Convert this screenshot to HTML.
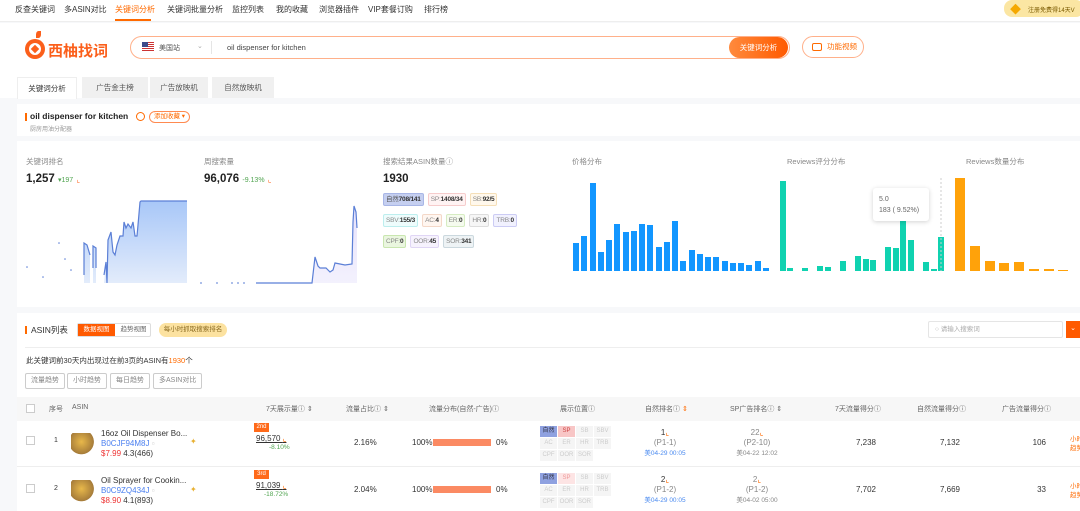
<!DOCTYPE html>
<html><head><meta charset="utf-8"><style>
*{margin:0;padding:0;box-sizing:border-box}
body{width:1080px;height:511px;overflow:hidden;background:#f7f8fa;font-family:"Liberation Sans","Noto Sans CJK SC",sans-serif;font-size:8px;color:#333;position:relative}
.a{position:absolute}
.nav{left:0;top:0;width:1080px;height:22px;background:#fff;border-bottom:1px solid #eee}
.nav span{position:absolute;top:4px;font-size:8px;color:#333}
.white{background:#fff}
.row{position:absolute;left:383px;display:flex;gap:4px}
.tag{height:13px;line-height:11px;font-size:6.5px;padding:0 2px;border:1px solid;border-radius:2px;white-space:nowrap;letter-spacing:-.2px}
.th{position:absolute;top:404px;font-size:7px;color:#666}
.r{position:absolute;font-size:8px;color:#333}
.pos{position:absolute;width:17px;height:11px;font-size:6px;line-height:11px;text-align:center;color:#ccc;background:#f5f5f5}
.btn{position:absolute;top:373px;height:16px;line-height:14px;border:1px solid #ccc;border-radius:2px;font-size:7px;color:#888;padding:0 5px}
</style></head><body>
<div class="a nav">
<span style="left:15px">反查关键词</span><span style="left:64px">多ASIN对比</span>
<span style="left:115px;color:#ff6a00">关键词分析</span><span style="left:167px">关键词批量分析</span>
<span style="left:232px">监控列表</span><span style="left:276px">我的收藏</span><span style="left:319px">浏览器插件</span>
<span style="left:368px">VIP套餐订购</span><span style="left:424px">排行榜</span>
<div class="a" style="left:115px;top:19px;width:36px;height:2px;background:#ff6a00"></div>
<div class="a" style="left:1004px;top:0;width:80px;height:17px;background:#fbe6a3;border-radius:8px"></div>
<div class="a" style="left:1010px;top:1px;font-size:11px;color:#f5a800">◆</div>
<span style="left:1028px;top:5px;font-size:6px;color:#7a5a00">注册免费得14天V</span>
</div>
<div class="a white" style="left:0;top:23px;width:1080px;height:75px"></div>
<div class="a" style="left:25px;top:39px;width:20px;height:20px;border-radius:50%;background:#fb5f1b"></div>
<div class="a" style="left:29px;top:43px;width:12px;height:12px;border-radius:50%;background:#fff"></div>
<div class="a" style="left:32px;top:46px;width:6px;height:6px;background:#fb5f1b;transform:rotate(45deg)"></div>
<div class="a" style="left:36px;top:31px;width:5px;height:7px;border-radius:50% 0;background:#fb5f1b"></div>
<div class="a" style="left:48px;top:40px;font-size:15px;font-weight:bold;color:#fb5f1b">西柚找词</div>
<div class="a" style="left:130px;top:36px;width:660px;height:23px;border:1px solid #ffb08a;border-radius:12px;background:#fff"></div>
<div class="a" style="left:142px;top:42px;width:12px;height:9px;background:repeating-linear-gradient(#c33 0 1px,#fff 1px 2px)"></div>
<div class="a" style="left:142px;top:42px;width:6px;height:5px;background:#3c4b8a"></div>
<div class="a" style="left:159px;top:43px;font-size:7px;color:#555">美国站</div>
<div class="a" style="left:197px;top:42px;font-size:7px;color:#aaa">⌄</div>
<div class="a" style="left:211px;top:41px;width:1px;height:13px;background:#e5e5e5"></div>
<div class="a" style="left:227px;top:43px;font-size:7.5px;color:#444">oil dispenser for kitchen</div>
<div class="a" style="left:729px;top:37px;width:59px;height:21px;border-radius:11px;background:linear-gradient(90deg,#ff8a3d,#ff5a00);color:#fff;font-size:7.5px;line-height:21px;text-align:center">关键词分析</div>
<div class="a" style="left:802px;top:36px;width:62px;height:22px;border:1px solid #ffb08a;border-radius:11px;color:#ff6a00;font-size:7.5px;line-height:20px;padding-left:24px">功能视频</div>
<div class="a" style="left:812px;top:43px;width:10px;height:8px;border:1.2px solid #ff6a00;border-radius:2px"></div>
<div class="a" style="left:17px;top:77px;width:60px;height:22px;background:#fff;border:1px solid #eee;border-bottom:none;font-size:7.5px;line-height:21px;text-align:center;color:#333">关键词分析</div>
<div class="a" style="left:82px;top:77px;width:66px;height:21px;background:#f0f0f0;font-size:7.5px;line-height:21px;text-align:center;color:#555">广告金主榜</div>
<div class="a" style="left:148px;top:77px;width:60px;height:21px;background:#f0f0f0;border-left:2px solid #fff;font-size:7.5px;line-height:21px;text-align:center;color:#555">广告放映机</div>
<div class="a" style="left:212px;top:77px;width:62px;height:21px;background:#f0f0f0;font-size:7.5px;line-height:21px;text-align:center;color:#555">自然放映机</div>
<div class="a white" style="left:17px;top:104px;width:1063px;height:32px"></div>
<div class="a" style="left:25px;top:113px;width:2px;height:8px;background:#ff6a00"></div>
<div class="a" style="left:30px;top:111px;font-size:8.5px;font-weight:bold;color:#222">oil dispenser for kitchen</div>
<div class="a" style="left:136px;top:112px;width:9px;height:9px;border:1px solid #ff6a00;border-radius:50%"></div>
<div class="a" style="left:149px;top:111px;width:41px;height:12px;border:1px solid #ff8a50;border-radius:6px;font-size:6.5px;color:#ff6a00;line-height:10px;padding-left:4px">添加收藏 ▾</div>
<div class="a" style="left:30px;top:124px;font-size:6px;color:#999">厨房用油分配器</div>
<div class="a white" style="left:17px;top:141px;width:1063px;height:166px"></div>
<div class="a" style="left:26px;top:156px;font-size:7.5px;color:#888">关键词排名</div>
<div class="a" style="left:26px;top:173px;font-size:11.5px;font-weight:bold;color:#222">1,257 <span style="font-size:7px;color:#52a552;font-weight:normal">▾197</span> <span style="font-size:8px;color:#ff7a3d;font-weight:normal">⌞</span></div>
<div class="a" style="left:204px;top:156px;font-size:7.5px;color:#888">周搜索量</div>
<div class="a" style="left:204px;top:173px;font-size:11.5px;font-weight:bold;color:#222">96,076 <span style="font-size:7px;color:#52a552;font-weight:normal">-9.13%</span> <span style="font-size:8px;color:#ff7a3d;font-weight:normal">⌞</span></div>
<div class="a" style="left:383px;top:156px;font-size:7.5px;color:#888">搜索结果ASIN数量ⓘ</div>
<div class="a" style="left:383px;top:173px;font-size:11.5px;font-weight:bold;color:#222">1930</div>
<svg class="a" style="left:0;top:0" width="1080" height="311">
<defs><linearGradient id="g1" x1="0" y1="0" x2="0" y2="1"><stop offset="0" stop-color="#a8c7f8"/><stop offset="1" stop-color="#e3ecfb"/></linearGradient>
<linearGradient id="g2" x1="0" y1="0" x2="0" y2="1"><stop offset="0" stop-color="#e6e1fb"/><stop offset="1" stop-color="#f3f1fd"/></linearGradient></defs>
<path d="M84,283 L84,243 L87,245 L90,255 L90,283Z M93,283 L93,246 L96,248 L96,283Z M104,283 L106,262 L107,266 L108,240 L111,232 L113,252 L115,255 L117,245 L120,236 L123,236 L124,222 L126,228 L128,224 L131,228 L133,222 L135,236 L137,236 L138,225 L140,202 L141,201 L187,201 L187,283Z" fill="url(#g1)"/>
<path d="M84,275 L84,243 L87,245 L90,255 M93,268 L93,246 L96,248 L96,268 M104,275 L106,262 L107,283 L108,240 L111,232 L113,252 L115,255 L117,245 L120,236 L123,236 L124,222 L126,228 L128,224 L131,228 L133,222 L135,236 L137,236 L138,225 L140,202 L141,201 L187,201" fill="none" stroke="#5b7fd6" stroke-width="1.2"/>
<g fill="#5b7fd6"><circle cx="27" cy="267" r=".8"/><circle cx="43" cy="277" r=".8"/><circle cx="59" cy="243" r=".8"/><circle cx="65" cy="259" r=".8"/><circle cx="71" cy="270" r=".8"/></g>
<path d="M312,283 L315,257 L318,266 L320,268 L326,268 L330,272 L333,270 L335,263 L340,264 L345,265 L352,264 L353,222 L354,206 L356,212 L357,228 L357,283Z" fill="url(#g2)"/>
<path d="M256,283 L312,283 L315,257 L318,266 L320,268 L326,268 L330,272 L333,270 L335,263 L340,264 L345,265 L352,264 L353,222 L354,206 L356,212 L357,228" fill="none" stroke="#5b7fd6" stroke-width="1.2"/>
<g fill="#5b7fd6"><rect x="200" y="282.5" width="2" height="1"/><rect x="216" y="282.5" width="2" height="1"/><rect x="231" y="282.5" width="2" height="1"/><rect x="237" y="282.5" width="2" height="1"/><rect x="243" y="282.5" width="2" height="1"/></g>
<g fill="#1296ff">
<rect x="573" y="243" width="6" height="28"/><rect x="581" y="236" width="6" height="35"/><rect x="590" y="183" width="6" height="88"/><rect x="598" y="252" width="6" height="19"/><rect x="606" y="240" width="6" height="31"/><rect x="614" y="224" width="6" height="47"/><rect x="623" y="232" width="6" height="39"/><rect x="631" y="231" width="6" height="40"/><rect x="639" y="224" width="6" height="47"/><rect x="647" y="225" width="6" height="46"/><rect x="656" y="247" width="6" height="24"/><rect x="664" y="242" width="6" height="29"/><rect x="672" y="221" width="6" height="50"/><rect x="680" y="261" width="6" height="10"/><rect x="689" y="250" width="6" height="21"/><rect x="697" y="254" width="6" height="17"/><rect x="705" y="257" width="6" height="14"/><rect x="713" y="257" width="6" height="14"/><rect x="722" y="261" width="6" height="10"/><rect x="730" y="263" width="6" height="8"/><rect x="738" y="263" width="6" height="8"/><rect x="746" y="265" width="6" height="6"/><rect x="755" y="261" width="6" height="10"/><rect x="763" y="268" width="6" height="3"/></g>
<g fill="#10d2b0">
<rect x="780" y="181" width="6" height="90"/><rect x="787" y="268" width="6" height="3"/><rect x="802" y="268" width="6" height="3"/><rect x="817" y="266" width="6" height="5"/><rect x="825" y="267" width="6" height="4"/><rect x="840" y="261" width="6" height="10"/><rect x="855" y="256" width="6" height="15"/><rect x="863" y="259" width="6" height="12"/><rect x="870" y="260" width="6" height="11"/><rect x="885" y="247" width="6" height="24"/><rect x="893" y="248" width="6" height="23"/><rect x="900" y="188" width="6" height="83"/><rect x="908" y="240" width="6" height="31"/><rect x="923" y="262" width="6" height="9"/><rect x="931" y="269" width="6" height="2"/><rect x="938" y="237" width="6" height="34"/></g>
<line x1="941" y1="178" x2="941" y2="271" stroke="#ccc" stroke-dasharray="2,2"/>
<g fill="#ffa20a">
<rect x="955" y="178" width="10" height="93"/><rect x="970" y="246" width="10" height="25"/><rect x="985" y="261" width="10" height="10"/><rect x="999" y="263" width="10" height="8"/><rect x="1014" y="262" width="10" height="9"/><rect x="1029" y="269" width="10" height="2"/><rect x="1044" y="269" width="10" height="2"/><rect x="1058" y="270" width="10" height="1"/></g>
</svg>
<div class="row" style="top:193px">
<div class="tag" style="background:#c5cff0;border-color:#a8b6e6;color:#555">自然<b style="color:#333">708/141</b></div>
<div class="tag" style="background:#fff3f3;border-color:#f6cccc;color:#888">SP:<b style="color:#333">1408/34</b></div>
<div class="tag" style="background:#fff8ec;border-color:#f5dfb8;color:#888">SB:<b style="color:#333">92/5</b></div></div>
<div class="row" style="top:214px">
<div class="tag" style="background:#eefcfc;border-color:#bdeeee;color:#888">SBV:<b style="color:#333">155/3</b></div>
<div class="tag" style="background:#fff6f0;border-color:#f4d8c8;color:#888">AC:<b style="color:#333">4</b></div>
<div class="tag" style="background:#f5fbee;border-color:#d6ecc2;color:#888">ER:<b style="color:#333">0</b></div>
<div class="tag" style="background:#f6f6f6;border-color:#ddd;color:#888">HR:<b style="color:#333">0</b></div>
<div class="tag" style="background:#f1f1fe;border-color:#ccccf4;color:#888">TRB:<b style="color:#333">0</b></div></div>
<div class="row" style="top:235px">
<div class="tag" style="background:#eaf6df;border-color:#c9e6b0;color:#888">CPF:<b style="color:#333">0</b></div>
<div class="tag" style="background:#f6f2fd;border-color:#e0d6f5;color:#888">OOR:<b style="color:#333">45</b></div>
<div class="tag" style="background:#eef3f5;border-color:#cbd8de;color:#888">SOR:<b style="color:#333">341</b></div></div>
<div class="a" style="left:572px;top:156px;font-size:7.5px;color:#888">价格分布</div>
<div class="a" style="left:787px;top:156px;font-size:7.5px;color:#888">Reviews评分分布</div>
<div class="a" style="left:966px;top:156px;font-size:7.5px;color:#888">Reviews数量分布</div>
<div class="a" style="left:873px;top:188px;width:56px;height:33px;background:#fff;border-radius:3px;box-shadow:0 1px 5px rgba(0,0,0,.18);font-size:7px;color:#666;padding:6px 6px;line-height:11px">5.0<br>183 ( 9.52%)</div>
<div class="a white" style="left:17px;top:313px;width:1063px;height:198px"></div>
<div class="a" style="left:25px;top:326px;width:2px;height:8px;background:#ff6a00"></div>
<div class="a" style="left:31px;top:324px;font-size:8.5px;color:#333">ASIN列表</div>
<div class="a" style="left:77px;top:323px;width:74px;height:14px;border:1px solid #ddd;border-radius:2px"></div>
<div class="a" style="left:78px;top:324px;width:37px;height:12px;background:#ff5a00;color:#fff;font-size:6.5px;line-height:12px;text-align:center">数据视图</div>
<div class="a" style="left:117px;top:324px;width:33px;height:12px;color:#666;font-size:6.5px;line-height:12px;text-align:center">趋势视图</div>
<div class="a" style="left:159px;top:323px;width:68px;height:14px;background:#fce2a0;border-radius:7px;color:#8a6a20;font-size:6.5px;line-height:14px;text-align:center">每小时抓取搜索排名</div>
<div class="a" style="left:928px;top:321px;width:135px;height:17px;border:1px solid #e5e5e5;border-radius:2px;font-size:6.5px;color:#aaa;line-height:15px;padding-left:6px">○ 请输入搜索词</div>
<div class="a" style="left:1066px;top:321px;width:14px;height:17px;background:#ff5a00;color:#fff;font-size:7px;line-height:16px;text-align:center">⌄</div>
<div class="a" style="left:25px;top:347px;width:1055px;height:1px;background:#eee"></div>
<div class="a" style="left:26px;top:355px;font-size:7.5px;color:#333">此关键词前30天内出现过在前3页的ASIN有<span style="color:#ff6a00">1930</span>个</div>
<div class="btn" style="left:25px">流量趋势</div><div class="btn" style="left:67px">小时趋势</div><div class="btn" style="left:110px">每日趋势</div><div class="btn" style="left:153px">多ASIN对比</div>
<div class="a" style="left:17px;top:397px;width:1063px;height:24px;background:#f7f7f7"></div>
<div class="a" style="left:26px;top:404px;width:9px;height:9px;border:1px solid #ccc;background:#fff"></div>
<div class="th" style="left:49px">序号</div><div class="th" style="left:72px">ASIN</div>
<div class="th" style="left:266px">7天展示量ⓘ ⇕</div><div class="th" style="left:346px">流量占比ⓘ ⇕</div>
<div class="th" style="left:429px">流量分布(自然-广告)ⓘ</div><div class="th" style="left:560px">展示位置ⓘ</div>
<div class="th" style="left:645px">自然排名ⓘ <span style="color:#ff6a00">⇕</span></div><div class="th" style="left:730px">SP广告排名ⓘ ⇕</div>
<div class="th" style="left:835px">7天流量得分ⓘ</div><div class="th" style="left:917px">自然流量得分ⓘ</div><div class="th" style="left:1002px">广告流量得分ⓘ</div>
<div class="a" style="left:17px;top:466px;width:1063px;height:1px;background:#eee"></div>
<div class="a" style="left:26px;top:436px;width:9px;height:9px;border:1px solid #ccc"></div>
<div class="a" style="left:26px;top:484px;width:9px;height:9px;border:1px solid #ccc"></div>
<div class="r" style="left:54px;top:437px;font-size:7px">1</div><div class="r" style="left:54px;top:485px;font-size:7px">2</div>
<div class="a" style="left:71px;top:433px;width:26px;height:22px;background:radial-gradient(circle at 40% 40%,#e8b84a,#a67c3a 60%,#fff 62%)"></div>
<div class="a" style="left:71px;top:480px;width:26px;height:22px;background:radial-gradient(circle at 40% 40%,#e8b84a,#a67c3a 60%,#fff 62%)"></div>
<div class="r" style="left:101px;top:429px;line-height:10px">16oz Oil Dispenser Bo...<br><span style="color:#4a7ff0">B0CJF94M8J</span> <span style="color:#ccc">▫</span><br><span style="color:#e33">$7.99</span> 4.3(466)</div>
<div class="r" style="left:101px;top:476px;line-height:10px">Oil Sprayer for Cookin...<br><span style="color:#4a7ff0">B0C9ZQ434J</span> <span style="color:#ccc">▫</span><br><span style="color:#e33">$8.90</span> 4.1(893)</div>
<div class="r" style="left:190px;top:437px;color:#e8b030">✦</div><div class="r" style="left:190px;top:485px;color:#e8b030">✦</div>
<div class="a" style="left:254px;top:423px;width:15px;height:9px;background:#ff6a1a;color:#fff;font-size:6px;line-height:9px;text-align:center">2nd</div>
<div class="a" style="left:254px;top:470px;width:15px;height:9px;background:#ff6a1a;color:#fff;font-size:6px;line-height:9px;text-align:center">3rd</div>
<div class="r" style="left:256px;top:434px;text-decoration:underline">96,570 <span style="color:#ff6a00">⌞</span></div>
<div class="r" style="left:269px;top:444px;font-size:6.5px;color:#52a552">-8.10%</div>
<div class="r" style="left:256px;top:481px;text-decoration:underline">91,039 <span style="color:#ff6a00">⌞</span></div>
<div class="r" style="left:264px;top:491px;font-size:6.5px;color:#52a552">-18.72%</div>
<div class="r" style="left:354px;top:438px">2.16%</div><div class="r" style="left:354px;top:485px">2.04%</div>
<div class="r" style="left:412px;top:438px">100%</div><div class="a" style="left:433px;top:439px;width:58px;height:7px;background:#fb8a63"></div><div class="r" style="left:496px;top:438px">0%</div>
<div class="r" style="left:412px;top:485px">100%</div><div class="a" style="left:433px;top:486px;width:58px;height:7px;background:#fb8a63"></div><div class="r" style="left:496px;top:485px">0%</div>
<div class="pos" style="left:540px;top:426px;background:#8fa1e0;color:#334">自然</div><div class="pos" style="left:558px;top:426px;background:#f8c6c6;color:#c44">SP</div><div class="pos" style="left:576px;top:426px">SB</div><div class="pos" style="left:594px;top:426px">SBV</div>
<div class="pos" style="left:540px;top:438px">AC</div><div class="pos" style="left:558px;top:438px">ER</div><div class="pos" style="left:576px;top:438px">HR</div><div class="pos" style="left:594px;top:438px">TRB</div>
<div class="pos" style="left:540px;top:450px">CPF</div><div class="pos" style="left:558px;top:450px">OOR</div><div class="pos" style="left:576px;top:450px">SOR</div>
<div class="pos" style="left:540px;top:473px;background:#8fa1e0;color:#334">自然</div><div class="pos" style="left:558px;top:473px;background:#fde4e4;color:#e99">SP</div><div class="pos" style="left:576px;top:473px">SB</div><div class="pos" style="left:594px;top:473px">SBV</div>
<div class="pos" style="left:540px;top:485px">AC</div><div class="pos" style="left:558px;top:485px">ER</div><div class="pos" style="left:576px;top:485px">HR</div><div class="pos" style="left:594px;top:485px">TRB</div>
<div class="pos" style="left:540px;top:497px">CPF</div><div class="pos" style="left:558px;top:497px">OOR</div><div class="pos" style="left:576px;top:497px">SOR</div>
<div class="r" style="left:635px;top:428px;width:60px;text-align:center;line-height:10px;white-space:nowrap">1<span style="color:#ff6a00">⌞</span><br><span style="color:#888">(P1-1)</span><br><span style="color:#4a8af0;font-size:6.5px">美04-29 00:05</span></div>
<div class="r" style="left:635px;top:475px;width:60px;text-align:center;line-height:10px;white-space:nowrap">2<span style="color:#ff6a00">⌞</span><br><span style="color:#888">(P1-2)</span><br><span style="color:#4a8af0;font-size:6.5px">美04-29 00:05</span></div>
<div class="r" style="left:727px;top:428px;width:60px;text-align:center;line-height:10px;color:#888;white-space:nowrap">22<span style="color:#ff6a00">⌞</span><br>(P2-10)<br><span style="font-size:6.5px">美04-22 12:02</span></div>
<div class="r" style="left:727px;top:475px;width:60px;text-align:center;line-height:10px;color:#888;white-space:nowrap">2<span style="color:#ff6a00">⌞</span><br>(P1-2)<br><span style="font-size:6.5px">美04-02 05:00</span></div>
<div class="r" style="left:848px;top:438px;width:28px;text-align:right">7,238</div><div class="r" style="left:848px;top:485px;width:28px;text-align:right">7,702</div>
<div class="r" style="left:932px;top:438px;width:28px;text-align:right">7,132</div><div class="r" style="left:932px;top:485px;width:28px;text-align:right">7,669</div>
<div class="r" style="left:1018px;top:438px;width:28px;text-align:right">106</div><div class="r" style="left:1018px;top:485px;width:28px;text-align:right">33</div>
<div class="r" style="left:1070px;top:435px;width:20px;font-size:6.5px;color:#ff6a00;line-height:9px;white-space:nowrap">小时<br>趋势</div>
<div class="r" style="left:1070px;top:482px;width:20px;font-size:6.5px;color:#ff6a00;line-height:9px;white-space:nowrap">小时<br>趋势</div>
</body></html>
